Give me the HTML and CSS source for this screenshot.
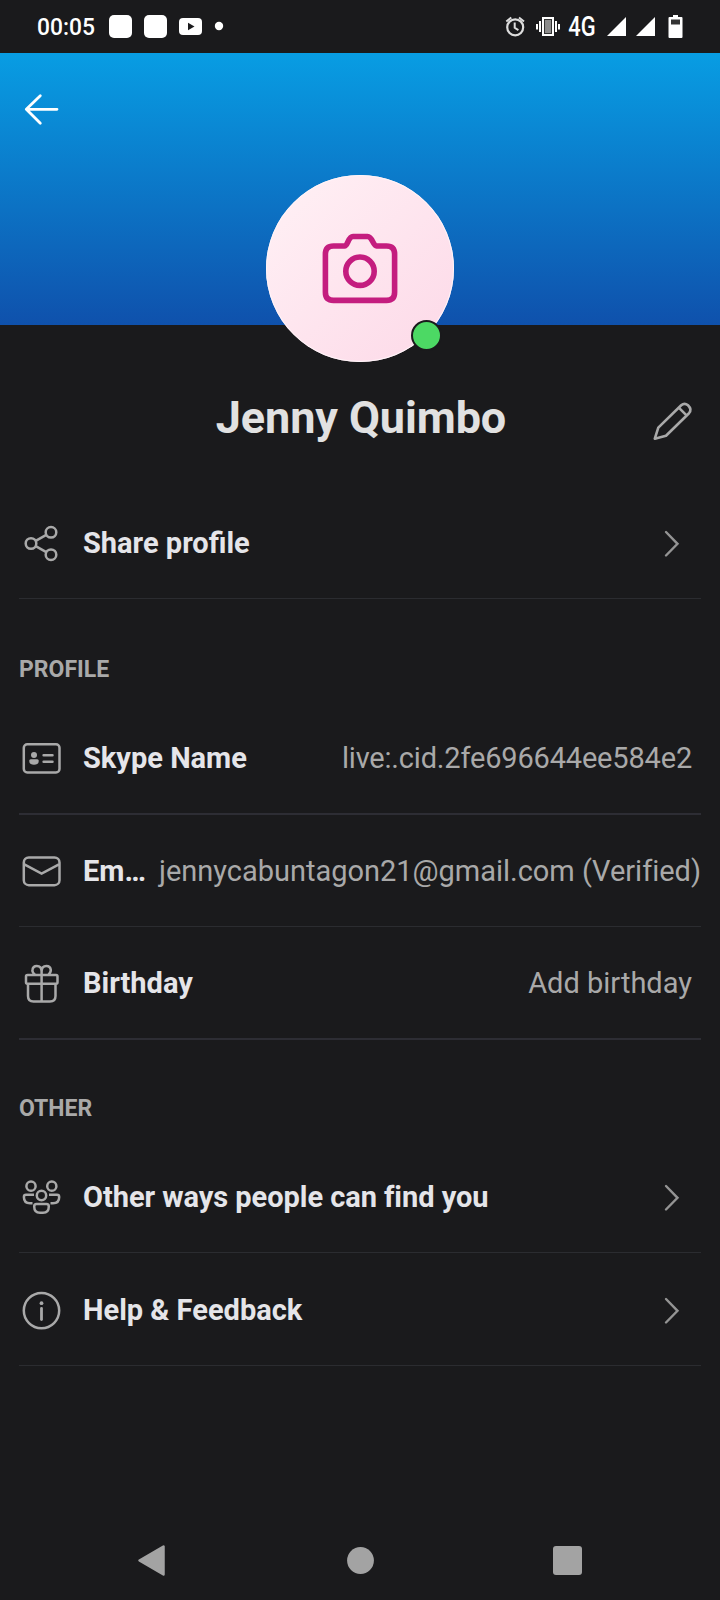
FILE: index.html
```html
<!DOCTYPE html>
<html lang="en">
<head>
<meta charset="utf-8">
<title>Profile</title>
<link rel="stylesheet" href="styles.css">
</head>
<body>
<div class="phone">
  <div class="status">
    <span class="clock">00:05</span>
    <svg class="status-left" viewBox="105 0 125 53" width="125" height="53" fill="#fff">
      <rect x="109" y="15" width="23" height="23" rx="5"/>
      <rect x="144" y="15" width="23" height="23" rx="5"/>
      <rect x="179" y="18" width="23" height="17" rx="4"/>
      <path d="M188 22.700v7.600l6.500-3.800z" fill="#1a1a1c"/>
      <circle cx="219" cy="26" r="4.200"/>
    </svg>
    <svg class="status-alarm" viewBox="500 0 65 53" width="65" height="53" fill="none" stroke="#ddd">
      <circle cx="515.200" cy="27.300" r="8" stroke-width="2.200"/>
      <path d="M514.700 22.500v5.300l3.700 2.400" stroke-width="2"/>
      <path d="M506.300 21.500l5-4M524 21.500l-5-4" stroke-width="2"/>
      <rect x="543" y="18" width="10" height="17" fill="#8c8c8c" stroke="#fff" stroke-width="2"/>
      <rect x="544.500" y="19.500" width="7" height="14" stroke="#333" stroke-width="1"/>
      <path d="M540 21v11M556 21v11M537 24v5.500M559 24v5.500" stroke="#fff" stroke-width="2"/>
    </svg>
    <span class="network">4G</span>
    <svg class="status-right" viewBox="600 0 120 53" width="120" height="53" fill="#fff">
      <path d="M626 17v19h-19z"/>
      <path d="M655 17v19h-19z"/>
      <path d="M673 15h5v2h3.500q1 0 1 1v19q0 1-1 1h-12q-1 0-1-1V18q0-1 1-1h3.500z"/>
      <path d="M671 19.500h9v5h-9z" fill="#333"/>
    </svg>
  </div>

  <header class="hero">
    <svg class="back" viewBox="19 90 44 40" width="44" height="40" fill="none" stroke="#fff" stroke-width="2.800" stroke-linecap="round" stroke-linejoin="round">
      <path d="M57 109.300H26.300M40.300 95.800L26.300 109.300l14 14"/>
    </svg>
    <div class="avatar">
      <svg viewBox="266 174.500 188 187" width="188" height="187" fill="none" stroke="#c41d7f" stroke-width="5.600" stroke-linejoin="round">
        <path d="M333.500 245.500H344.500C348 245.500 348 236 353 236H367.500C372.500 236 373 245.500 376.500 245.500H386.500Q394.600 245.500 394.600 253.600V291.800Q394.600 299.900 386.500 299.900H333.500Q325.400 299.900 325.400 291.800V253.600Q325.400 245.500 333.500 245.500Z"/>
        <circle cx="360" cy="270.700" r="14.200"/>
      </svg>
      <span class="presence"></span>
    </div>
  </header>

  <div class="name-bar">
    <h1 class="name">Jenny Quimbo</h1>
    <svg class="edit" viewBox="650 398 46 46" width="46" height="46" fill="none" stroke="#a9a9a9" stroke-width="2.600" stroke-linejoin="round">
      <path d="M654.800 438.700L658.300 427.600L681.200 405.300Q684.500 402.300 688 405.300Q692.300 409.500 689 413.200L666 435.700Z"/>
      <path d="M678.800 407.700l7.500 7.500"/>
    </svg>
  </div>

  <main class="list">
    <div class="row">
      <svg class="icon" viewBox="19 520 44 45">
        <circle cx="31" cy="543.500" r="5.300"/><circle cx="51" cy="532.300" r="5.300"/><circle cx="51" cy="554.700" r="5.300"/>
        <path d="M35.700 540.900l10.600-6M35.700 546.200l10.600 5.900"/>
      </svg>
      <span class="label">Share profile</span>
      <svg class="chevron" viewBox="0 0 16 28"><path d="M2 2l11.500 11.800L2 25.500"/></svg>
    </div>

    <h2 class="section section-profile">PROFILE</h2>
    <div class="row row-thick">
      <svg class="icon" viewBox="19 735 44 45">
        <rect x="23.800" y="744.300" width="35.700" height="28.200" rx="3.500"/>
        <g class="solid"><circle cx="34" cy="755" r="3"/><path d="M30.800 759.300h6.400q1.600 0 1.600 1.500q0 4-4.800 4t-4.800-4q0-1.500 1.600-1.500z"/></g>
        <path d="M43.600 755.200h8.900M43.600 761.800h8.900" stroke-linecap="round"/>
      </svg>
      <span class="label">Skype Name</span>
      <span class="value value-id">live:.cid.2fe696644ee584e2</span>
    </div>
    <div class="row">
      <svg class="icon" viewBox="19 848 44 45">
        <rect x="23.800" y="857.500" width="35.700" height="27.700" rx="5"/>
        <path d="M24.300 864.300L41.600 873.700L59 864.300"/>
      </svg>
      <span class="label">Em…</span>
      <span class="value value-email">jennycabuntagon21@gmail.com (Verified)</span>
    </div>
    <div class="row row-thick">
      <svg class="icon" viewBox="19 960 44 45">
        <rect x="26" y="975" width="31.500" height="8.800" rx="1.500"/>
        <path d="M28 984V996Q28 1001.500 33.500 1001.500H50Q55.500 1001.500 55.500 996V984M41.600 975V1001.500"/>
        <path d="M35 975Q32 972 32.400 970Q33 966 36.800 966Q41.600 966 41.600 971.500V975M41.600 971.500Q41.600 966 46.400 966Q50.300 966 50.800 970Q51 972 48.300 975"/>
      </svg>
      <span class="label">Birthday</span>
      <span class="value">Add birthday</span>
    </div>

    <h2 class="section section-other">OTHER</h2>
    <div class="row">
      <svg class="icon" viewBox="19 1174 44 45">
        <circle cx="31" cy="1186.200" r="4.600"/><circle cx="51.800" cy="1186.200" r="4.600"/><circle cx="41.500" cy="1195.500" r="4.700"/>
        <path d="M34 1194.800H26Q23.900 1194.800 23.900 1197Q23.900 1203.300 30 1203.300H32.500M49 1194.800H57Q59.200 1194.800 59.200 1197Q59.200 1203.300 53 1203.300H50.500"/>
        <path d="M36.500 1204H46.500Q48.800 1204 48.800 1206.500Q48.800 1212.800 43 1212.800H40Q34.200 1212.800 34.200 1206.500Q34.200 1204 36.500 1204Z"/>
      </svg>
      <span class="label label-long">Other ways people can find you</span>
      <svg class="chevron" viewBox="0 0 16 28"><path d="M2 2l11.500 11.800L2 25.500"/></svg>
    </div>
    <div class="row row-last">
      <svg class="icon" viewBox="19 1287 44 45">
        <circle cx="41.500" cy="1310.600" r="17.700"/>
        <circle class="solid" cx="41.500" cy="1303.200" r="1.900"/>
        <path d="M41.500 1308.500v11" stroke-width="2.800" stroke-linecap="round"/>
      </svg>
      <span class="label">Help &amp; Feedback</span>
      <svg class="chevron" viewBox="0 0 16 28"><path d="M2 2l11.500 11.800L2 25.500"/></svg>
    </div>
  </main>

  <nav class="navbar">
    <svg viewBox="0 0 720 80" width="720" height="80" fill="#a3a3a3">
      <path d="M139.500 40.500L163.500 26.500V54.500z" stroke="#a3a3a3" stroke-width="2.500" stroke-linejoin="round"/>
      <circle cx="360.500" cy="40.500" r="13.400"/>
      <rect x="553" y="26" width="29" height="29" rx="3"/>
    </svg>
  </nav>
</div>
</body>
</html>
```
FILE: styles.css
```css
* {
  box-sizing: border-box;
}

body {
  margin: 0;
  background: #1a1a1c;
  font-family: Roboto, "Liberation Sans", sans-serif;
}

svg {
  display: block;
  flex: none;
}

.phone {
  display: flex;
  flex-direction: column;
  width: 720px;
  height: 1600px;
  overflow: hidden;
  background: #1a1a1c;
}

.status {
  display: flex;
  align-items: center;
  height: 53px;
  padding-left: 37px;
  color: #fff;
}

.clock {
  width: 68px;
  padding-top: 1px;
  font-size: 24px;
  font-weight: 500;
  line-height: 53px;
  white-space: nowrap;
  transform: scaleX(0.95);
  transform-origin: left;
}

.status-alarm {
  margin-left: 270px;
}

.network {
  width: 35px;
  padding: 1px 0 0 4px;
  font-size: 27px;
  font-weight: 500;
  line-height: 53px;
  white-space: nowrap;
  transform: scaleX(0.81);
  transform-origin: left;
}

.hero {
  display: flex;
  flex-direction: column;
  align-items: center;
  height: 272px;
  padding-top: 37px;
  background: linear-gradient(#089de3, #0f51ac);
}

.back {
  align-self: flex-start;
  margin-left: 19px;
}

.avatar {
  position: relative;
  flex: none;
  width: 188px;
  height: 187px;
  margin-top: 44.500px;
  border-radius: 50%;
  background: linear-gradient(135deg, #ffeff4 10%, #fddbe9 90%);
  box-shadow: inset 0 0 0 1px #fff4f8;
}

.presence {
  position: absolute;
  left: 145px;
  top: 145.500px;
  width: 31px;
  height: 31px;
  border: 2px solid #1a1a1c;
  border-radius: 50%;
  background: #4cd964;
}

.name-bar {
  display: grid;
  grid-template-columns: 70px 1fr 70px;
  align-items: start;
  height: 162px;
  padding-top: 63px;
}

.name {
  grid-column: 2;
  margin: 0;
  padding-left: 2px;
  color: #e1e1e1;
  font-size: 45px;
  font-weight: 700;
  letter-spacing: -0.100px;
  line-height: 60px;
  text-align: center;
  white-space: nowrap;
}

.edit {
  margin-top: 10px;
}

.list {
  padding: 0 19px;
}

.row {
  display: flex;
  align-items: center;
  height: 112px;
  border-bottom: 1px solid #2b2c30;
  font-size: 29px;
  line-height: 34px;
  white-space: nowrap;
}

.row-thick {
  height: 113px;
  border-bottom: 2px solid #2d2d34;
}

.row-last {
  height: 113px;
  padding-top: 1px;
}

.icon {
  width: 44px;
  height: 45px;
  margin-right: 20px;
  fill: none;
  stroke: #a9a9a9;
  stroke-width: 2.500;
}

.solid {
  fill: #a9a9a9;
  stroke: none;
}

.label {
  color: #e5e5e9;
  font-weight: 700;
}

.label-long {
  letter-spacing: -0.050px;
}

.value {
  margin-left: auto;
  padding-right: 9px;
  color: #a9a9a9;
}

.value-id {
  letter-spacing: -0.180px;
}

.value-email {
  padding-right: 0;
  letter-spacing: -0.020px;
}

.chevron {
  width: 16px;
  height: 28px;
  margin-top: 2px;
  margin-left: auto;
  margin-right: 21px;
  fill: none;
  stroke: #949494;
  stroke-width: 2.400;
  stroke-linecap: round;
}

.section {
  margin: 0;
  color: #a9a9a9;
  font-size: 23px;
  font-weight: 700;
  line-height: 28px;
}

.section-profile {
  height: 103px;
  padding-top: 57px;
}

.section-other {
  height: 101px;
  padding-top: 55px;
}

.navbar {
  margin-top: auto;
}
```
